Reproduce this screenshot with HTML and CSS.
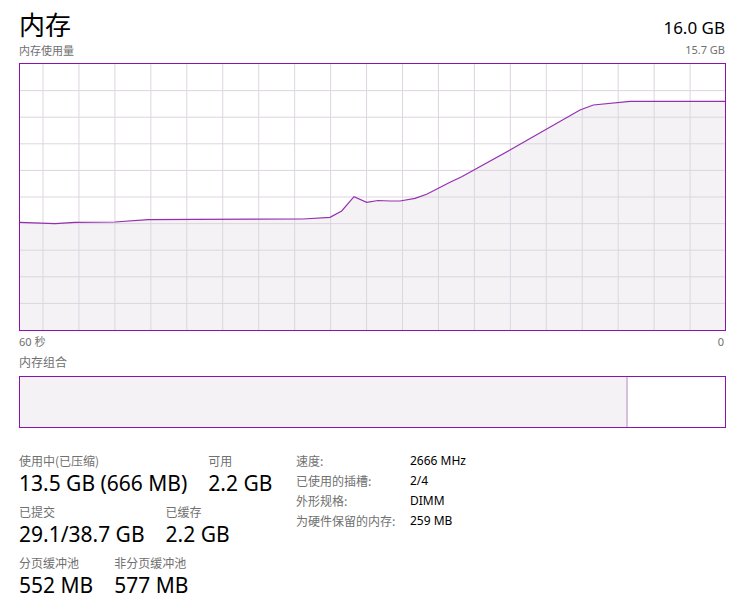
FILE: index.html
```html
<!DOCTYPE html>
<html lang="zh">
<head>
    <meta charset="UTF-8">
    <title>内存</title>
    <link rel="stylesheet" href="styles.css">
</head>
<body>
    <div class="page">
        <div class="head">
            <h1 class="title">内存</h1>
            <div class="total">16.0 GB</div>
        </div>
        <div class="sub">
            <span>内存使用量</span>
            <span>15.7 GB</span>
        </div>

        <div class="chart">
            <svg viewBox="0 0 705 266" width="705" height="266">
                <polygon class="area" points="0,158.3 35,159.7 55,158.3 95,158 128,155.7 175,155.3 283,155 310,153.3 321.7,147 334,132.7 346.7,138.3 358,136.5 370,137 380,137 395,134.3 406.7,130.3 430,118.3 441.7,112.7 490,86 500,80.3 560,46 573.3,41 610,37.3 705,37.3 705,266 0,266"/>
                <g class="grid">
                    <line x1="0" y1="26.6" x2="705" y2="26.6"/>
                    <line x1="0" y1="53.2" x2="705" y2="53.2"/>
                    <line x1="0" y1="79.8" x2="705" y2="79.8"/>
                    <line x1="0" y1="106.4" x2="705" y2="106.4"/>
                    <line x1="0" y1="133" x2="705" y2="133"/>
                    <line x1="0" y1="159.6" x2="705" y2="159.6"/>
                    <line x1="0" y1="186.2" x2="705" y2="186.2"/>
                    <line x1="0" y1="212.8" x2="705" y2="212.8"/>
                    <line x1="0" y1="239.4" x2="705" y2="239.4"/>
                </g>
                <g class="grid" id="vgrid"></g>
                <polyline class="line" points="0,158.3 35,159.7 55,158.3 95,158 128,155.7 175,155.3 283,155 310,153.3 321.7,147 334,132.7 346.7,138.3 358,136.5 370,137 380,137 395,134.3 406.7,130.3 430,118.3 441.7,112.7 490,86 500,80.3 560,46 573.3,41 610,37.3 705,37.3"/>
            </svg>
        </div>
        <div class="axis">
            <span>60 秒</span>
            <span>0</span>
        </div>

        <div class="label comp-label">内存组合</div>
        <div class="comp">
            <div class="comp-used"></div>
        </div>

        <div class="stats">
            <div class="left">
                <div class="row">
                    <div class="stat">
                        <div class="label">使用中(已压缩)</div>
                        <div class="value">13.5 GB (666 MB)</div>
                    </div>
                    <div class="stat">
                        <div class="label">可用</div>
                        <div class="value">2.2 GB</div>
                    </div>
                </div>
                <div class="row">
                    <div class="stat">
                        <div class="label">已提交</div>
                        <div class="value">29.1/38.7 GB</div>
                    </div>
                    <div class="stat">
                        <div class="label">已缓存</div>
                        <div class="value">2.2 GB</div>
                    </div>
                </div>
                <div class="row">
                    <div class="stat">
                        <div class="label">分页缓冲池</div>
                        <div class="value">552 MB</div>
                    </div>
                    <div class="stat">
                        <div class="label">非分页缓冲池</div>
                        <div class="value">577 MB</div>
                    </div>
                </div>
            </div>
            <div class="info">
                <span class="label">速度:</span><span>2666 MHz</span>
                <span class="label">已使用的插槽:</span><span>2/4</span>
                <span class="label">外形规格:</span><span>DIMM</span>
                <span class="label">为硬件保留的内存:</span><span>259 MB</span>
            </div>
        </div>
    </div>

    <script>
        let vgrid = document.getElementById('vgrid');
        for (let x = 23; x < 705; x += 35.95) {
            let l = document.createElementNS('http://www.w3.org/2000/svg', 'line');
            l.setAttribute('x1', x);
            l.setAttribute('x2', x);
            l.setAttribute('y1', 0);
            l.setAttribute('y2', 266);
            vgrid.appendChild(l);
        }
    </script>
</body>
</html>
```

FILE: styles.css
```css
body {
    margin: 0;
    background: #fff;
    font-family: "Segoe UI", "Noto Sans", "Noto Sans CJK SC", sans-serif;
    color: #000;
}
.page {
    padding: 4px 10px 0 19px;
}
.head {
    display: flex;
    justify-content: space-between;
    align-items: flex-end;
    height: 38px;
}
.title {
    margin: 0;
    font-size: 26px;
    font-weight: normal;
    line-height: 36px;
    font-family: "Noto Sans CJK SC", sans-serif;
}
.total {
    font-size: 17px;
    line-height: 24px;
    padding-bottom: 2px;
}
.sub, .axis {
    display: flex;
    justify-content: space-between;
    font-size: 11px;
    color: #707070;
    line-height: 16px;
}
.sub {
    height: 21px;
}
.sub span:first-child, .label {
    font-family: "Noto Sans CJK SC", sans-serif;
}
.chart {
    border: 1px solid #8b12ae;
    height: 266px;
    width: 705px;
    background: #fff;
}
.chart svg {
    display: block;
}
.grid line {
    stroke: #ddd5df;
    stroke-width: 1;
}
.area {
    fill: #f4f2f5;
}
.line {
    fill: none;
    stroke: #9430b0;
    stroke-width: 1.2;
}
.axis {
    margin-top: 3px;
    padding-right: 1px;
}
.label {
    font-size: 12px;
    color: #707070;
    line-height: 17px;
}
.comp-label {
    margin-top: 3px;
    height: 23px;
}
.comp {
    border: 1px solid #8b12ae;
    height: 50px;
    width: 705px;
    display: flex;
}
.comp-used {
    width: 606px;
    background: #f4f2f5;
    border-right: 2px solid #d7c0de;
}
.stats {
    display: flex;
    margin-top: 24px;
}
.left {
    width: 277px;
}
.row {
    display: flex;
    gap: 21px;
    margin-bottom: 6px;
}
.value {
    font-size: 21px;
    line-height: 28px;
}
.info {
    display: grid;
    grid-template-columns: 114px auto;
    grid-auto-rows: 20px;
    font-size: 12px;
    align-content: start;
}
```
